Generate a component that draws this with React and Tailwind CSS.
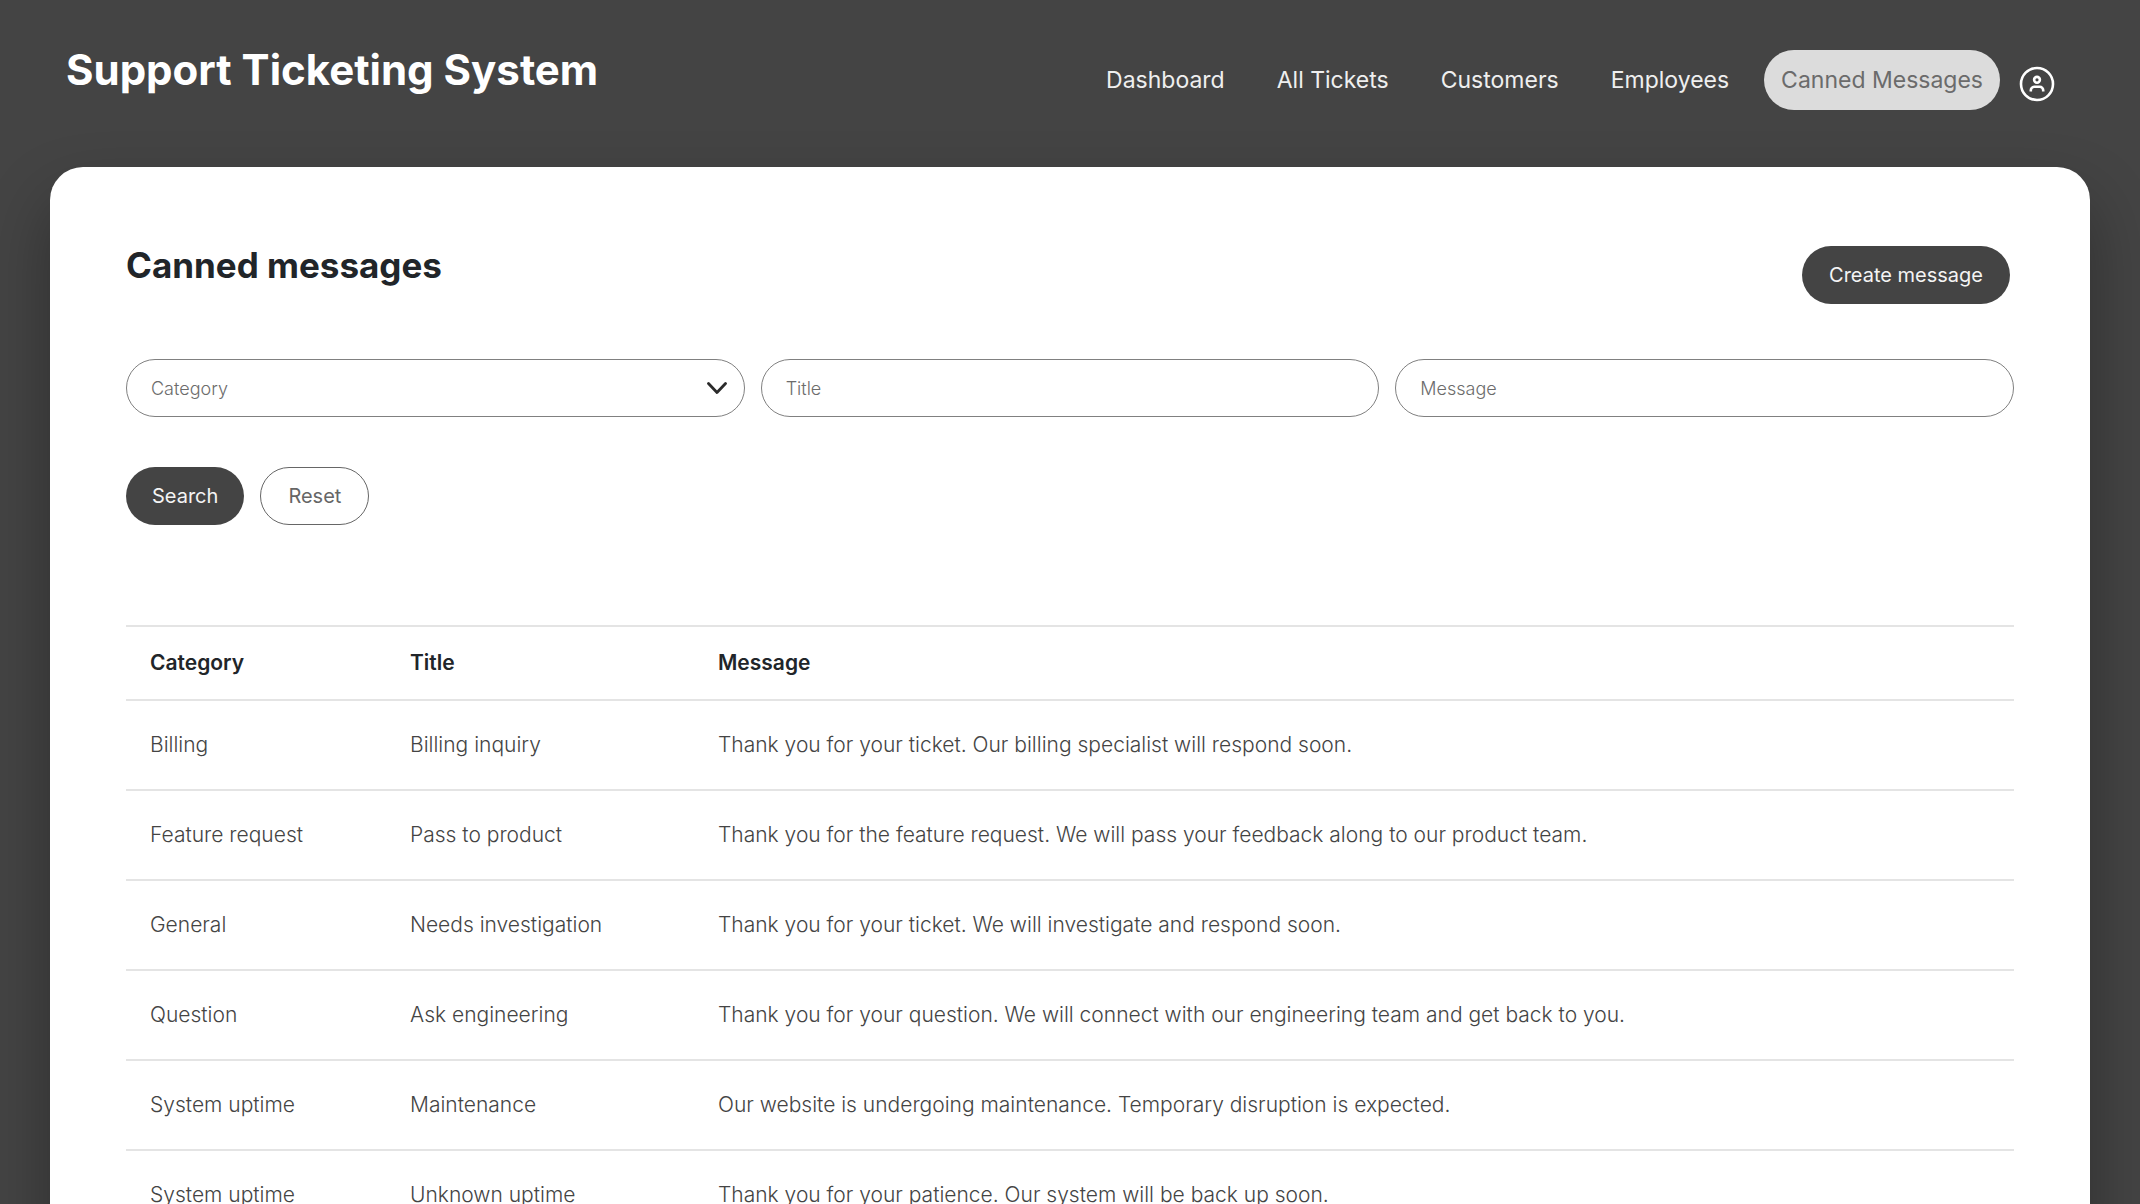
import React, { useState } from "react";

const navLinks = ["Dashboard", "All Tickets", "Customers", "Employees", "Canned Messages"];

const categories = ["Billing", "Feature request", "General", "Question", "System uptime"];

const messages = [
    { category: "Billing", title: "Billing inquiry", message: "Thank you for your ticket. Our billing specialist will respond soon." },
    { category: "Feature request", title: "Pass to product", message: "Thank you for the feature request. We will pass your feedback along to our product team." },
    { category: "General", title: "Needs investigation", message: "Thank you for your ticket. We will investigate and respond soon." },
    { category: "Question", title: "Ask engineering", message: "Thank you for your question. We will connect with our engineering team and get back to you." },
    { category: "System uptime", title: "Maintenance", message: "Our website is undergoing maintenance. Temporary disruption is expected." },
    { category: "System uptime", title: "Unknown uptime", message: "Thank you for your patience. Our system will be back up soon." },
];

const emptyFilters = { category: "", title: "", message: "" };

const UserIcon = () => (
    <svg viewBox="0 0 36 36" className="size-9" fill="none" stroke="currentColor" strokeWidth="2.6" aria-hidden="true">
        <circle cx="18" cy="18" r="16" />
        <circle cx="18" cy="13.8" r="2.9" />
        <path d="M11.8 25.4v-1.2a3.4 3.4 0 0 1 3.4-3.4h5.6a3.4 3.4 0 0 1 3.4 3.4v1.2" />
    </svg>
);

const Header = () => (
    <header className="flex h-[167px] items-start justify-between pl-[66px] pr-[85px]">
        <h1 className="mt-[45px] text-[42px] leading-[50px] font-bold text-white">Support Ticketing System</h1>
        <nav className="mt-[50px] flex items-center" aria-label="Main">
            <ul className="flex items-center gap-[18px]">
                {navLinks.map((link) => (
                    <li key={link}>
                        <a
                            href="#"
                            className={`block rounded-full px-[17px] py-4 text-[23px] leading-7 ${
                                link === "Canned Messages" ? "bg-[#dcdcdc] text-[#6b6b6b]" : "text-[#efefef]"
                            }`}
                        >
                            {link}
                        </a>
                    </li>
                ))}
            </ul>
            <button type="button" aria-label="Account" className="mt-[7px] ml-[19px] text-white">
                <UserIcon />
            </button>
        </nav>
    </header>
);

const App = () => {
    const [filters, setFilters] = useState(emptyFilters);
    const [applied, setApplied] = useState(emptyFilters);

    const handleChange = (e) => {
        setFilters({ ...filters, [e.target.name]: e.target.value });
    };

    const handleSubmit = (e) => {
        e.preventDefault();
        setApplied(filters);
    };

    const handleReset = () => {
        setFilters(emptyFilters);
        setApplied(emptyFilters);
    };

    const rows = messages.filter(
        (item) =>
            (!applied.category || item.category === applied.category) &&
            item.title.toLowerCase().includes(applied.title.toLowerCase()) &&
            item.message.toLowerCase().includes(applied.message.toLowerCase())
    );

    return (
        <div className="flex min-h-screen flex-col bg-[#444444] font-['Inter','Liberation_Sans',sans-serif]">
            <Header />

            <main className="mx-[50px] flex-1 rounded-t-[33px] bg-white px-[76px] pt-[79px] shadow-[0_33px_66px_rgba(0,0,0,0.32)]">
                <div className="flex items-start justify-between">
                    <h2 className="text-[35px] leading-[38px] font-bold text-[#212529]">Canned messages</h2>
                    <button type="button" className="mr-1 h-[58px] rounded-full bg-[#444444] px-[27px] text-[20px] text-[#f4f4f4]">
                        Create message
                    </button>
                </div>

                {/* Filters */}
                <form onSubmit={handleSubmit} className="mt-[55px]">
                    <div className="grid grid-cols-3 gap-4">
                        <div className="relative">
                            <select
                                name="category"
                                aria-label="Category"
                                value={filters.category}
                                onChange={handleChange}
                                className="h-[58px] w-full appearance-none rounded-full border border-[#808080] bg-white px-6 text-[18px] font-light text-[#6c6c6c]"
                            >
                                <option value="">Category</option>
                                {categories.map((category) => (
                                    <option key={category}>{category}</option>
                                ))}
                            </select>
                            <svg
                                viewBox="0 0 20 14"
                                className="pointer-events-none absolute top-[22px] right-[18px] h-[14px] w-5"
                                fill="none"
                                stroke="#2b2b2b"
                                strokeWidth="2.8"
                                strokeLinecap="round"
                                strokeLinejoin="round"
                                aria-hidden="true"
                            >
                                <path d="M1.5 2.5 10 11.5l8.5-9" />
                            </svg>
                        </div>
                        <input
                            type="text"
                            name="title"
                            aria-label="Title"
                            placeholder="Title"
                            value={filters.title}
                            onChange={handleChange}
                            className="h-[58px] w-full rounded-full border border-[#808080] px-6 text-[18px] font-light text-[#444444] placeholder:text-[#6c6c6c]"
                        />
                        <input
                            type="text"
                            name="message"
                            aria-label="Message"
                            placeholder="Message"
                            value={filters.message}
                            onChange={handleChange}
                            className="h-[58px] w-full rounded-full border border-[#808080] px-6 text-[18px] font-light text-[#444444] placeholder:text-[#6c6c6c]"
                        />
                    </div>
                    <div className="mt-[50px] flex gap-4">
                        <button type="submit" className="h-[58px] rounded-full bg-[#444444] px-[26px] text-[20px] text-[#f4f4f4]">
                            Search
                        </button>
                        <button
                            type="button"
                            onClick={handleReset}
                            className="h-[58px] rounded-full border border-[#666666] px-[27px] text-[20px] text-[#666666]"
                        >
                            Reset
                        </button>
                    </div>
                </form>

                {/* Messages table */}
                <table className="mt-[100px] w-full table-fixed border-collapse text-left text-[21px] leading-7">
                    <colgroup>
                        <col className="w-[260px]" />
                        <col className="w-[308px]" />
                        <col />
                    </colgroup>
                    <thead>
                        <tr className="h-[74px] border-y-2 border-[#e4e4e4] text-[#212529]">
                            <th className="pl-6 font-semibold">Category</th>
                            <th className="pl-6 font-semibold">Title</th>
                            <th className="pl-6 font-semibold">Message</th>
                        </tr>
                    </thead>
                    <tbody>
                        {rows.map((item) => (
                            <tr key={item.title} className="h-[90px] border-b-2 border-[#e4e4e4] font-light text-[#444444]">
                                <td className="pl-6">{item.category}</td>
                                <td className="pl-6">{item.title}</td>
                                <td className="pl-6">{item.message}</td>
                            </tr>
                        ))}
                    </tbody>
                </table>
            </main>
        </div>
    );
};

export default App;
